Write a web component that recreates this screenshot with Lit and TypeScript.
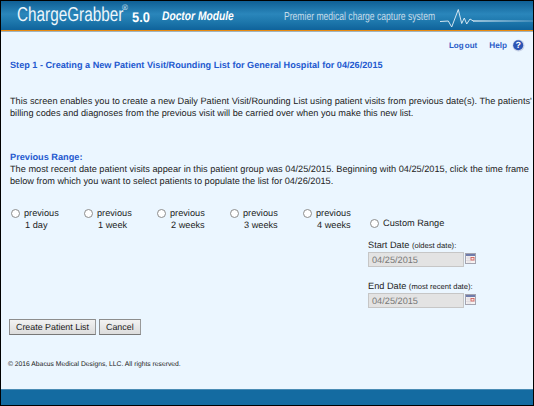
import { LitElement, html, css, svg } from "lit";
import { customElement } from "lit/decorators.js";

@customElement("app-root")
export class AppRoot extends LitElement {
  static styles = css`
    :host {
      display: flex;
      flex-direction: column;
      width: 534px;
      height: 406px;
      box-sizing: border-box;
      border: 1px solid #000;
      background: #ebf6ff;
      font-family: "Liberation Sans", Arial, sans-serif;
      font-size: 9.2px;
      text-rendering: geometricPrecision;
      color: #222;
      overflow: hidden;
    }
    .header {
      height: 29px;
      flex: none;
      display: flex;
      align-items: center;
      background: linear-gradient(#0f5f95, #2a86bb 45%, #1e78ad 70%, #0f639b);
      color: #eef6fb;
      border-bottom: 1px solid #e98a10;
      box-shadow: 0 1px 0 #9fb4c0;
      padding-left: 16px;
      white-space: nowrap;
    }
    .header span { display: block; flex: none; transform-origin: left center; }
    .brand { font-size: 20px; width: 105px; transform: scaleX(0.765); }
    .reg { font-size: 8px; width: 10px; align-self: flex-start; margin-top: 2px; color: #d8e8f2; }
    .ver { font-weight: 700; font-size: 14px; width: 30px; padding-top: 3px; color: #fff; transform: scaleX(0.92); }
    .mod { font-style: italic; font-weight: 700; font-size: 12.5px; width: 122px; color: #fff; padding-top: 1px; transform: scaleX(0.82); }
    .tag { font-size: 11.6px; width: 153px; color: #c4dbe9; padding-top: 1px; transform: scaleX(0.74); }
    .ecg { flex: none; display: block; }
    .links {
      display: flex;
      justify-content: flex-end;
      align-items: center;
      gap: 12px;
      padding: 7px 8px 0 0;
      height: 14px;
      color: #2a5cc8;
      font-weight: 700;
      font-size: 8.2px;
    }
    .links .out { word-spacing: -1px; font-size: 8px; }
    .help { display: flex; align-items: center; gap: 5px; }
    .body { flex: 1; padding: 0 8px; display: flex; flex-direction: column; }
    h1 {
      margin: 7px 0 0 1px;
      font-size: 9.15px;
      line-height: 12px;
      font-weight: 700;
      color: #2359cf;
    }
    p { margin: 0; line-height: 12px; white-space: nowrap; }
    .intro { margin-top: 24px; padding-left: 1px; }
    .range-title { margin-top: 32px; padding-left: 1px; color: #2359cf; font-weight: 700; line-height: 12px; }
    .range-text { padding-left: 1px; }
    .options { display: flex; margin-top: 20px; padding-left: 2px; height: 112px; }
    .opt { width: 73px; flex: none; display: flex; gap: 4px; line-height: 12px; }
    .opt b { display: block; font-weight: 400; padding-left: 1px; }
    .radio {
      width: 7px; height: 7px; flex: none; margin-top: 2px;
      border: 1px solid #8c8c8c; border-radius: 50%; background: #fff; box-sizing: content-box;
    }
    .custom { margin-left: -8px; width: 130px; display: flex; flex-direction: column; padding-top: 10px; }
    .custom-row { display: flex; gap: 4px; line-height: 12px; padding-left: 2px; }
    .field-label { margin-top: 10px; line-height: 12px; }
    .field-label small { font-size: 7.6px; }
    .field-label.second { margin-top: 13px; }
    .field-row { display: flex; align-items: flex-start; gap: 1px; }
    .field-row svg { margin-top: 1px; }
    .date {
      width: 96px; height: 15px; box-sizing: border-box; background: #e3e3e3;
      border: 1px solid #c6c6c6; color: #777; font-size: 9.2px; line-height: 14px; padding-left: 3px;
    }
    .buttons { display: flex; gap: 3px; }
    .btn {
      height: 16px; box-sizing: border-box; padding: 0 6px; font-size: 8.9px; line-height: 14px;
      border: 1px solid #8d8d8d; background: linear-gradient(#f2f2f2, #dcdcdc); color: #222;
      border-right-color: #999; border-bottom-color: #777;
    }
    .copy { margin-top: 25px; font-size: 6.75px; line-height: 10px; color: #222; margin-left: -1px; }
    .footer { height: 16px; flex: none; background: #146ba1; border-top: 1px solid #4a8cb5; box-sizing: border-box; }
  `;

  private calendar() {
    return svg`<svg width="11" height="11" viewBox="0 0 11 11">
      <rect x="0.5" y="0.5" width="10" height="10" fill="#f6f2f2" stroke="#a4a4b0"/>
      <rect x="1" y="1" width="9" height="2" fill="#6f7cab"/>
      <path d="M1 5h9M1 7.5h9M3 3v7M5 3v7" stroke="#d8d4da" stroke-width=".6"/>
      <rect x="6" y="4.5" width="3" height="2.5" fill="#f6e8e8" stroke="#cf5650" stroke-width=".8"/>
    </svg>`;
  }

  render() {
    const opts = ["1 day", "1 week", "2 weeks", "3 weeks", "4 weeks"];
    return html`
      <div class="header">
        <span class="brand">ChargeGrabber</span><span class="reg">®</span>
        <span class="ver">5.0</span><span class="mod">Doctor Module</span>
        <span class="tag">Premier medical charge capture system</span>
        <svg class="ecg" width="96" height="29" viewBox="0 0 96 29">
          <defs><linearGradient id="fade"><stop offset="0" stop-color="#cfe3ef"/><stop offset="1" stop-color="#4f94bf"/></linearGradient></defs>
          <path d="M3 20.5l8.3-.5 3.4 6 6.6-17.5 3.4 14 2.6-5.5 2.4 6 3.3-5 3.3 2" fill="none" stroke="#d4e6f1" stroke-width="1"/>
          <rect x="36" y="19.3" width="60" height="1.4" fill="url(#fade)"/>
        </svg>
      </div>
      <div class="links">
        <span class="out">Log out</span>
        <span class="help">Help
          <svg width="13" height="13" viewBox="0 0 13 13">
            <circle cx="6.5" cy="6.5" r="6" fill="#c9d3e6"/>
            <circle cx="6.2" cy="6.2" r="5" fill="#2c54b4"/>
            <text x="6.2" y="9.4" text-anchor="middle" font-size="9" font-weight="700" fill="#fff" font-family="Liberation Sans">?</text>
          </svg>
        </span>
      </div>
      <div class="body">
        <h1>Step 1 - Creating a New Patient Visit/Rounding List for General Hospital for 04/26/2015</h1>
        <p class="intro">This screen enables you to create a new Daily Patient Visit/Rounding List using patient visits from previous date(s). The patients'<br>billing codes and diagnoses from the previous visit will be carried over when you make this new list.</p>
        <div class="range-title">Previous Range:</div>
        <p class="range-text">The most recent date patient visits appear in this patient group was 04/25/2015. Beginning with 04/25/2015, click the time frame<br>below from which you want to select patients to populate the list for 04/26/2015.</p>
        <div class="options">
          ${opts.map((t) => html`<div class="opt"><span class="radio"></span><div>previous<b>${t}</b></div></div>`)}
          <div class="custom">
            <div class="custom-row"><span class="radio"></span><span>Custom Range</span></div>
            <div class="field-label">Start Date <small>(oldest date):</small></div>
            <div class="field-row"><div class="date">04/25/2015</div>${this.calendar()}</div>
            <div class="field-label second">End Date <small>(most recent date):</small></div>
            <div class="field-row"><div class="date">04/25/2015</div>${this.calendar()}</div>
          </div>
        </div>
        <div class="buttons"><div class="btn">Create Patient List</div><div class="btn">Cancel</div></div>
        <div class="copy">© 2016 Abacus Medical Designs, LLC. All rights reserved.</div>
      </div>
      <div class="footer"></div>
    `;
  }
}
